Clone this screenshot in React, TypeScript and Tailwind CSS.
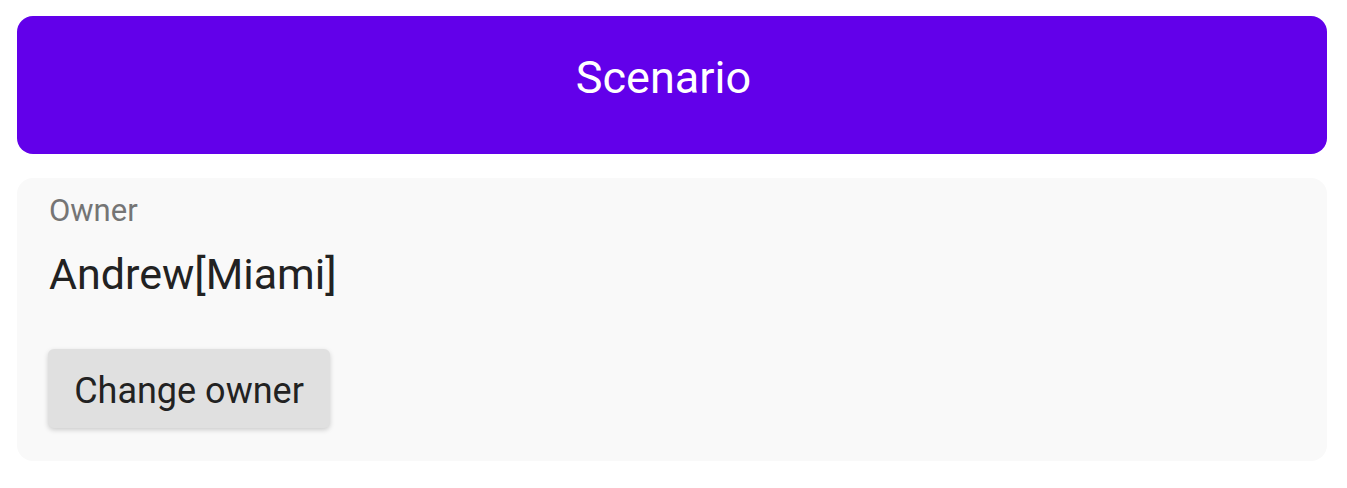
const font = { fontFamily: 'Roboto, "Noto Sans", sans-serif' }

export default function App() {
	return (
		<div className="min-h-screen bg-white pl-[17px] pr-[20px] pt-[16px]" style={font}>
			<header className="h-[138px] rounded-[16px] bg-[#6200ea] pt-[35px] pr-[17px] text-center">
				<h1 className="text-[45px] leading-[54px] font-normal text-white">Scenario</h1>
			</header>

			<section className="mt-[24px] rounded-[16px] bg-[#f9f9f9] pl-[32px] pt-[15px] pb-[33px]">
				<div className="text-[31px] leading-[36px] text-[#757575]">Owner</div>
				<div className="mt-[19px] text-[43px] leading-[52px] text-[#222222]">Andrew[Miami]</div>
				<button
					type="button"
					className="mt-[49px] -ml-[1px] flex h-[79px] w-[282px] items-center justify-center rounded-[6px] bg-[#e0e0e0] pt-[4px] text-[36px] text-[#222222] shadow-[0_2px_5px_rgba(0,0,0,0.18)]"
				>
					Change owner
				</button>
			</section>
		</div>
	)
}
